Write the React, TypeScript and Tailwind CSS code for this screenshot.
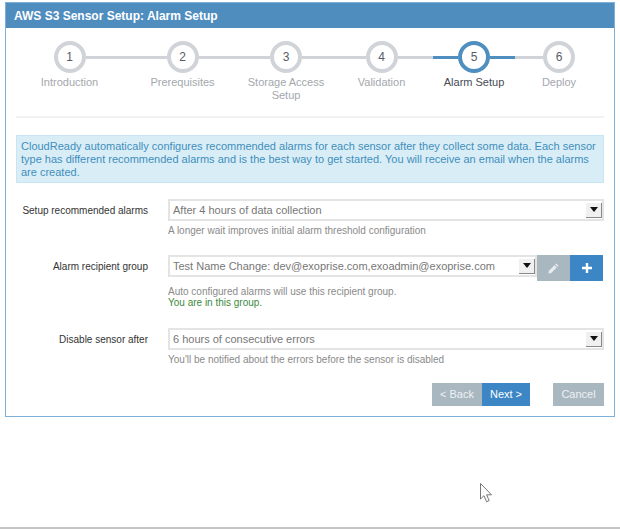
import { ReactNode } from "react"

const steps = [
  { n: 1, label: "Introduction", width: "w-[107px]", first: true },
  { n: 2, label: "Prerequisites", width: "w-[119px]" },
  { n: 3, label: "Storage Access Setup", width: "w-[88px]" },
  { n: 4, label: "Validation", width: "w-[103px]" },
  { n: 5, label: "Alarm Setup", width: "w-[82px]", active: true },
  { n: 6, label: "Deploy", width: "w-[88px]", last: true },
]

function Stepper() {
  return (
    <div className="flex pt-[13px]">
      {steps.map((step) => (
        <div key={step.n} className={step.width}>
          <div className="flex items-center">
            <div
              className={`h-[3px] flex-1 ${step.first ? "" : step.active ? "bg-[#4f8fc0]" : "bg-[#d0d3d8]"}`}
            />
            <div
              className={`flex h-[32px] w-[32px] items-center justify-center rounded-full border-[4px] bg-white text-[12px] text-[#555c66] ${
                step.active ? "border-[#4f8fc0]" : "border-[#d0d3d8]"
              }`}
            >
              {step.n}
            </div>
            <div
              className={`h-[3px] flex-1 ${step.last ? "" : step.active ? "bg-[#4f8fc0]" : "bg-[#d0d3d8]"}`}
            />
          </div>
          <div
            className={`mt-[3px] text-center text-[11px] leading-[13px] ${
              step.active ? "text-[#444b55]" : "text-[#a3a7ad]"
            }`}
          >
            {step.label}
          </div>
        </div>
      ))}
    </div>
  )
}

function Select({ value, className }: { value: string; className: string }) {
  return (
    <div
      className={`flex h-[22px] items-center justify-between border-2 border-[#e4e4e4] bg-white pl-[3px] pr-[0px] text-[11px] text-[#777] ${className}`}
    >
      <span className="whitespace-nowrap">{value}</span>
      <span className="flex h-[15px] w-[16px] items-center justify-center border-r border-b border-[#8a8a8a] bg-[#f0f0f0]">
        <svg width="8" height="5" viewBox="0 0 8 5">
          <path d="M0 0h8L4 5z" fill="#111" />
        </svg>
      </span>
    </div>
  )
}

function Row({ label, children, className }: { label: string; children: ReactNode; className: string }) {
  return (
    <div className={`flex ${className}`}>
      <div className="w-[132px] pt-[5px] text-right text-[10px] leading-[13px] text-[#333]">{label}</div>
      <div className="ml-[20px] flex-1">{children}</div>
    </div>
  )
}

export default function App() {
  return (
    <div
      className="relative flex h-[529px] w-[620px] flex-col bg-white"
      style={{ fontFamily: '"Liberation Sans", Arial, sans-serif' }}
    >
      <div className="ml-[5px] mt-[2px] h-[415px] w-[610px] border border-[#7fb0d8]">
        <div className="flex h-[25px] items-center bg-[#4f8dbf] pl-[8px] text-[12px] font-bold text-white">
          AWS S3 Sensor Setup: Alarm Setup
        </div>
        <div className="px-[10px]">
          <Stepper />
          <div className="mt-[14px] h-[2px] bg-[#f1f1f1]" />
          <div className="mt-[17px] border border-[#c5e6f2] bg-[#d9edf7] px-[4px] pb-[3px] pt-[4px] text-[11px] leading-[13px] text-[#3f8fbb]">
            CloudReady automatically configures recommended alarms for each sensor after they collect some data. Each
            sensor type has different recommended alarms and is the best way to get started. You will receive an email
            when the alarms are created.
          </div>

          <Row label="Setup recommended alarms" className="mt-[16px]">
            <Select value="After 4 hours of data collection" className="w-[436px]" />
            <div className="mt-[3px] text-[10px] leading-[13px] text-[#8a8a8a]">
              A longer wait improves initial alarm threshold configuration
            </div>
          </Row>

          <Row label="Alarm recipient group" className="mt-[18px]">
            <div className="flex items-start">
              <Select value="Test Name Change: dev@exoprise.com,exoadmin@exoprise.com" className="w-[369px]" />
              <div className="flex h-[26px] w-[33px] items-center justify-center bg-[#a9b7c1]">
                <svg width="11" height="11" viewBox="0 0 12 12">
                  <path d="M9 0.5 11.5 3 10.3 4.2 7.8 1.7zM7 2.5 9.5 5 3.5 11 0.5 11.5 1 8.5z" fill="#e8ecef" />
                </svg>
              </div>
              <div className="flex h-[26px] w-[33px] items-center justify-center bg-[#3d86c6]">
                <svg width="10" height="10" viewBox="0 0 10 10">
                  <path d="M3.8 0h2.4v3.8H10v2.4H6.2V10H3.8V6.2H0V3.8h3.8z" fill="#fff" />
                </svg>
              </div>
            </div>
            <div className="mt-[5px] text-[10px] leading-[11px] text-[#8a8a8a]">
              Auto configured alarms will use this recipient group.
            </div>
            <div className="text-[10px] leading-[11px] text-[#3d8a3d]">You are in this group.</div>
          </Row>

          <Row label="Disable sensor after" className="mt-[20px]">
            <Select value="6 hours of consecutive errors" className="w-[436px]" />
            <div className="mt-[3px] text-[10px] leading-[13px] text-[#8a8a8a]">
              You'll be notified about the errors before the sensor is disabled
            </div>
          </Row>

          <div className="mt-[17px] flex justify-end text-[11px]">
            <button className="h-[23px] w-[50px] bg-[#a9b7c1] text-[#eef1f3]">&lt; Back</button>
            <button className="h-[23px] w-[48px] bg-[#3d86c6] text-white">Next &gt;</button>
            <button className="ml-[23px] h-[23px] w-[51px] bg-[#a9b7c1] text-[#eef1f3]">Cancel</button>
          </div>
        </div>
      </div>

      <div className="flex-1" />
      <div className="h-[2px] bg-[#c4c4c4]" />

      <svg className="absolute left-[480px] top-[483px]" width="15" height="20" viewBox="0 0 15 20">
        <path d="M0.5 0.5V16L4 12.7 6.6 18.8 9.2 17.6 6.6 11.8H11.5z" fill="#fff" stroke="#555" strokeWidth="0.8" />
      </svg>
    </div>
  )
}
